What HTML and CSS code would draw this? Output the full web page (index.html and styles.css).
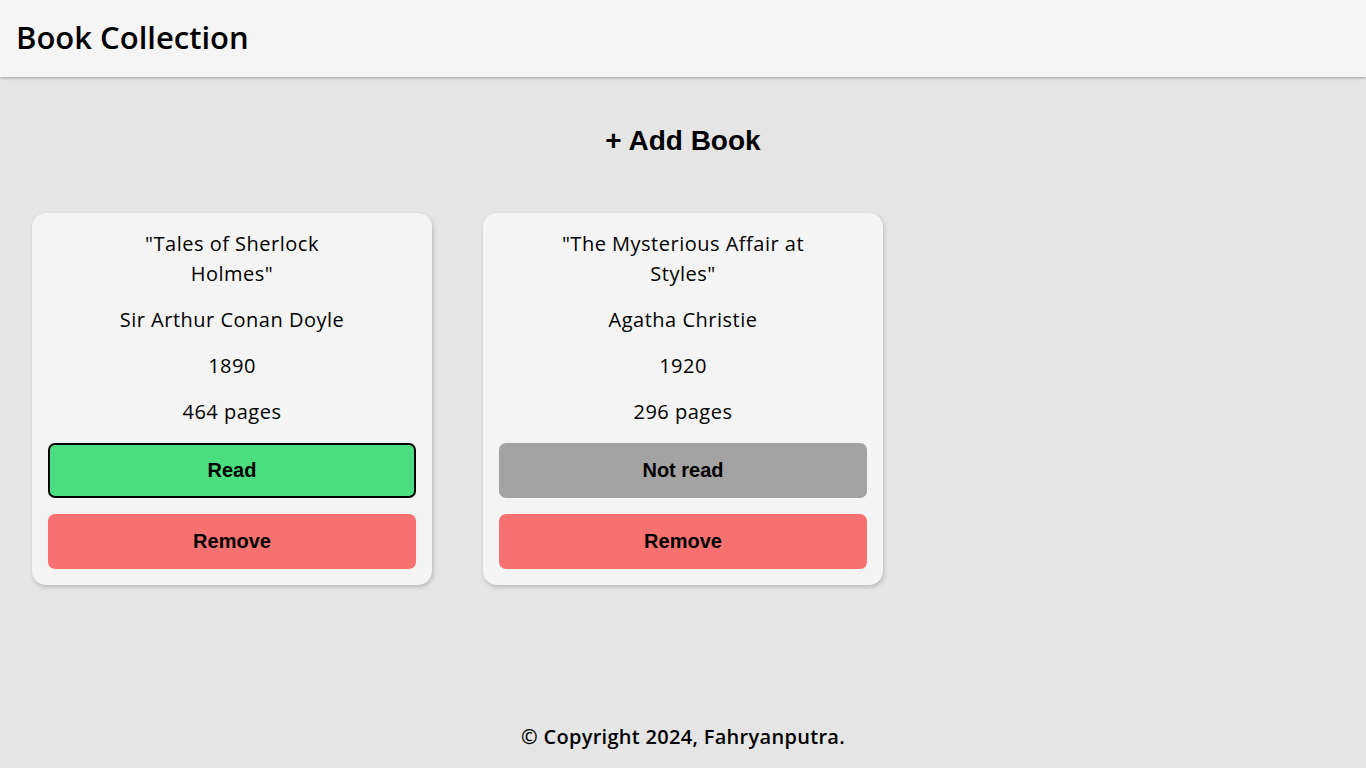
FILE: index.html
```html
<!DOCTYPE html>
<html lang="en">
<head>
<meta charset="UTF-8">
<title>Book Collection</title>
<link rel="stylesheet" href="styles.css">
</head>
<body>
<div class="page">
  <header class="header">
    <h1 class="brand">Book Collection</h1>
  </header>
  <main class="main">
    <div class="add-row">
      <button class="add-btn">+ Add Book</button>
    </div>
    <section class="books">
      <article class="card">
        <p class="title">"Tales of Sherlock Holmes"</p>
        <p class="info">Sir Arthur Conan Doyle</p>
        <p class="info">1890</p>
        <p class="info">464 pages</p>
        <button class="btn btn-read">Read</button>
        <button class="btn btn-remove">Remove</button>
      </article>
      <article class="card">
        <p class="title">"The Mysterious Affair at Styles"</p>
        <p class="info">Agatha Christie</p>
        <p class="info">1920</p>
        <p class="info">296 pages</p>
        <button class="btn btn-unread">Not read</button>
        <button class="btn btn-remove">Remove</button>
      </article>
    </section>
  </main>
  <footer class="footer">© Copyright 2024, Fahryanputra.</footer>
</div>
</body>
</html>
```
FILE: styles.css
```css
* { box-sizing: border-box; }
html, body { margin: 0; padding: 0; }
body {
  background: #e5e5e5;
  font-family: "Open Sans", "Noto Sans", sans-serif;
  color: #000;
}
.page {
  min-height: 100vh;
  display: flex;
  flex-direction: column;
}
.header {
  height: 77px;
  background: #f5f5f5;
  display: flex;
  align-items: center;
  padding: 0 16px 3px;
  box-shadow: 0 1px 3px rgba(0,0,0,0.3);
  position: relative;
  z-index: 1;
}
.brand {
  margin: 0;
  font-size: 31px;
  font-weight: 600;
  letter-spacing: 0;
  line-height: 1;
}
.main {
  flex: 1;
  padding: 48px 32px 0;
  display: flex;
  flex-direction: column;
}
.add-row {
  display: flex;
  justify-content: center;
}
.add-btn {
  background: none;
  border: none;
  padding: 0;
  font-family: "Liberation Sans", Arial, sans-serif;
  font-weight: 700;
  font-size: 28px;
  line-height: 32px;
  color: #000;
  cursor: pointer;
}
.books {
  margin-top: 56px;
  display: grid;
  grid-template-columns: repeat(auto-fill, 400px);
  gap: 51px;
}
.card {
  background: #f4f4f4;
  border-radius: 14px;
  padding: 16px;
  display: flex;
  flex-direction: column;
  gap: 16px;
  box-shadow: 1px 2px 4px rgba(0,0,0,0.2);
}
.card p {
  margin: 0;
  text-align: center;
  font-size: 20px;
  letter-spacing: 0.5px;
  line-height: 30px;
}
.title {
  max-width: 245px;
  align-self: center;
}
.btn {
  height: 55px;
  border: none;
  border-radius: 7px;
  font-family: "Liberation Sans", Arial, sans-serif;
  font-weight: 700;
  font-size: 20px;
  color: #000;
  cursor: pointer;
}
.btn-read {
  background: #4ade80;
  border: 2px solid #000;
}
.btn-unread { background: #a3a3a3; }
.btn-remove { background: #f87171; }
.footer {
  text-align: center;
  padding: 16px 0;
  line-height: 30px;
  font-size: 20px;
  font-weight: 600;
  letter-spacing: 0.3px;
}
```
